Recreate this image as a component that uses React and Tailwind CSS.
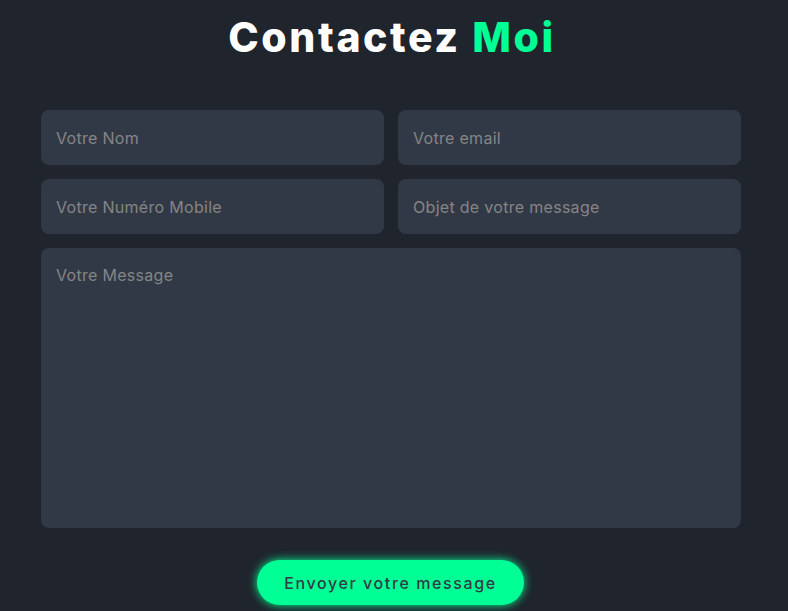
export default function App() {
  const font = { fontFamily: "Inter, 'Noto Sans', sans-serif" };

  return (
    <section className="min-h-[611px] w-full bg-[#1f242d] pt-[12px]" style={font}>
      <h2 className="pr-[4px] text-center text-[41px] font-extrabold leading-[50px] text-white tracking-[2.6px]">
        Contactez <span className="text-[#00ff95]">Moi</span>
      </h2>

      <form className="ml-[41px] mt-[48px] w-[700px]">
        <div className="grid grid-cols-2 gap-[14px]">
          <input
            type="text"
            placeholder="Votre Nom"
            className="h-[55px] rounded-lg bg-[#323946] px-[15px] text-[16px] tracking-[0.3px] text-white placeholder:text-[#858585] outline-none"
          />
          <input
            type="email"
            placeholder="Votre email"
            className="h-[55px] rounded-lg bg-[#323946] px-[15px] text-[16px] tracking-[0.3px] text-white placeholder:text-[#858585] outline-none"
          />
          <input
            type="text"
            placeholder="Votre Numéro Mobile"
            className="h-[55px] rounded-lg bg-[#323946] px-[15px] text-[16px] tracking-[0.3px] text-white placeholder:text-[#858585] outline-none"
          />
          <input
            type="text"
            placeholder="Objet de votre message"
            className="h-[55px] rounded-lg bg-[#323946] px-[15px] text-[16px] tracking-[0.3px] text-white placeholder:text-[#858585] outline-none"
          />
        </div>

        <textarea
          placeholder="Votre Message"
          className="mt-[14px] block h-[280px] w-full resize-none rounded-lg bg-[#323946] px-[15px] py-[15px] text-[16px] leading-[24px] tracking-[0.3px] text-white placeholder:text-[#858585] outline-none"
        />

        <div className="mt-[32px] flex justify-center pr-[1px]">
          <button
            type="button"
            className="h-[45px] w-[267px] rounded-full bg-[#00ff95] text-[16px] font-medium tracking-[1.6px] text-[#323946] shadow-[0_0_10px_#00ff95]"
          >
            Envoyer votre message
          </button>
        </div>
      </form>
    </section>
  );
}
